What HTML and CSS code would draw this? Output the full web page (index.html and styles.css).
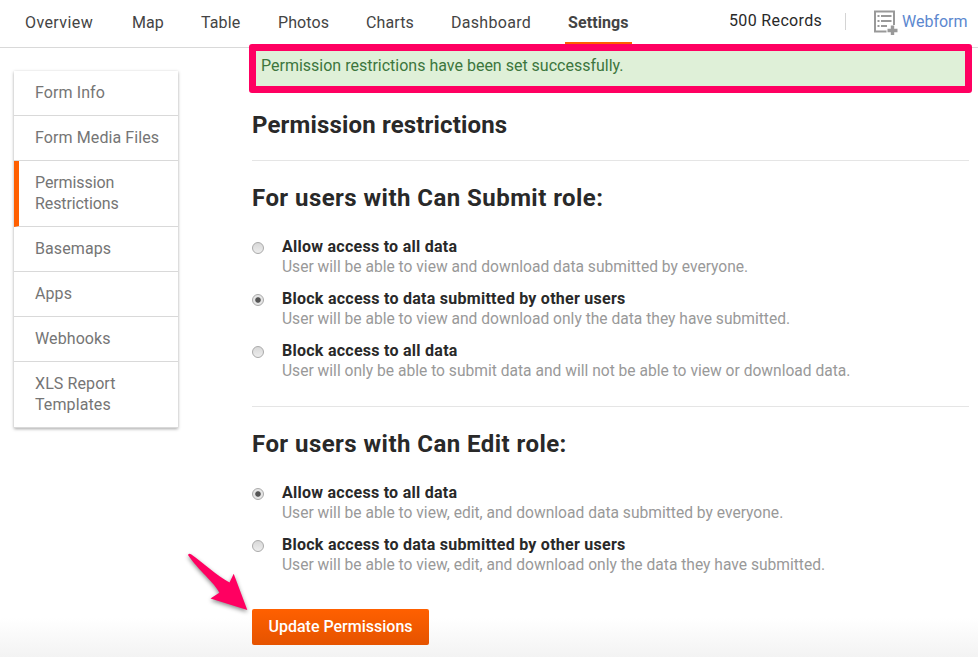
FILE: index.html
```html
<!DOCTYPE html>
<html lang="en">
<head>
<meta charset="utf-8">
<title>Permission restrictions</title>
<link rel="stylesheet" href="styles.css">
</head>
<body>
<header class="topbar">
  <nav class="tabs">
    <a class="tab wide">Overview</a>
    <a class="tab">Map</a>
    <a class="tab">Table</a>
    <a class="tab">Photos</a>
    <a class="tab">Charts</a>
    <a class="tab">Dashboard</a>
    <a class="tab active">Settings</a>
  </nav>
  <span class="records">500 Records</span>
  <a class="webform">
    <svg width="25" height="25" viewBox="0 0 25 25" fill="none" stroke="#999">
      <path stroke-width="2" d="M21 15V1.500H2V21.500H13.500"/>
      <path stroke-width="2" d="M4.500 6h2M8 6h10.500M4.500 11h2M8 11h10.500M4.500 16h2M8 16h6"/>
      <path stroke-width="3.400" d="M14.500 20.500h10M19.500 15.500v9.500"/>
    </svg>
    <span>Webform</span>
  </a>
</header>

<div class="page">
  <aside class="side">
    <a class="side-item">Form Info</a>
    <a class="side-item">Form Media Files</a>
    <a class="side-item current">Permission<br>Restrictions</a>
    <a class="side-item">Basemaps</a>
    <a class="side-item">Apps</a>
    <a class="side-item">Webhooks</a>
    <a class="side-item">XLS Report<br>Templates</a>
  </aside>

  <main class="main">
    <div class="alert">Permission restrictions have been set successfully.<span class="highlight"></span></div>
    <h1 class="title">Permission restrictions</h1>

    <section class="group">
      <h2 class="title role">For users with Can Submit role:</h2>
      <div class="option"><i class="radio"></i><div><div class="name">Allow access to all data</div><div class="desc">User will be able to view and download data submitted by everyone.</div></div></div>
      <div class="option"><i class="radio on"></i><div><div class="name">Block access to data submitted by other users</div><div class="desc">User will be able to view and download only the data they have submitted.</div></div></div>
      <div class="option"><i class="radio"></i><div><div class="name">Block access to all data</div><div class="desc">User will only be able to submit data and will not be able to view or download data.</div></div></div>
    </section>

    <section class="group">
      <h2 class="title role">For users with Can Edit role:</h2>
      <div class="option"><i class="radio on"></i><div><div class="name">Allow access to all data</div><div class="desc">User will be able to view, edit, and download data submitted by everyone.</div></div></div>
      <div class="option"><i class="radio"></i><div><div class="name">Block access to data submitted by other users</div><div class="desc">User will be able to view, edit, and download only the data they have submitted.</div></div></div>
    </section>

    <div class="actions">
      <button class="update">Update Permissions</button>
      <svg class="arrow" width="70" height="66" viewBox="184 550 70 66">
        <path fill="#ff0061" d="M188 555Q189 553 191 554.300C204 563.500 216 575 229.500 582.500L233.700 573.700L247.300 610L210.500 598.500L219.300 592.700C215 583 198 570 188 555Z"/>
      </svg>
    </div>
  </main>
</div>
</body>
</html>
```
FILE: styles.css
```css
* { box-sizing: border-box; }

body {
  margin: 0;
  height: 657px;
  overflow: hidden;
  font: 16px/21px Roboto, "Liberation Sans", sans-serif;
  color: #292929;
  background: linear-gradient(#fff 0, #fff 618px, #f3f3f3 657px);
}

.topbar {
  display: flex;
  height: 48px;
  padding-left: 25px;
  border-bottom: 1px solid #d9d9d9;
  background: #fff;
}

.tabs {
  display: grid;
  grid-template-columns: 107px 69px 77px 88px 85px 114px 67px;
  color: #444;
}

.tab { padding-top: 12px; letter-spacing: 0.1px; }
.tab.wide { letter-spacing: 0.4px; }
.tab:nth-child(6) { letter-spacing: 0.3px; }

.tab.active {
  height: 45px;
  padding-left: 3px;
  border-bottom: 3px solid #ff5f00;
  font-weight: 700;
  letter-spacing: 0.1px;
}

.records {
  width: 117px;
  height: 17px;
  margin: 13px 0 0 97px;
  border-right: 1px solid #d4d4d4;
  line-height: 16px;
  letter-spacing: 0.35px;
}

.webform {
  display: flex;
  gap: 4px;
  padding: 10px 0 0 27px;
  color: #5c88cf;
}

.webform span { margin-top: 1px; }

.page {
  display: flex;
  gap: 74px;
  padding-left: 14px;
}

.side {
  width: 164px;
  height: 357px;
  margin-top: 23px;
  background: #fff;
  box-shadow: 0 1px 3px rgba(0, 0, 0, 0.35);
  color: #757575;
}

.side-item {
  display: block;
  padding: 11px 0 12px 21px;
  border-bottom: 1px solid #d9d9d9;
  letter-spacing: 0.1px;
}

.side-item.current {
  padding-left: 16px;
  border-left: 5px solid #ff5f00;
  letter-spacing: -0.1px;
}

.main { width: 717px; }

.alert {
  position: relative;
  height: 41px;
  padding: 7px 9px;
  background: #dff0d8;
  color: #3c763d;
}

.highlight {
  position: absolute;
  inset: -4px -3px -4px;
  border: 7px solid #ff0061;
  border-radius: 3px;
}

.title {
  margin: 0;
  font-size: 24px;
  line-height: 30px;
  font-weight: 700;
  letter-spacing: 0.16px;
}

h1.title { padding: 21px 0 20px; }

.group { border-top: 1px solid #e5e5e5; height: 246px; padding-top: 22px; }
.group + .group { height: 203px; }
.role { margin-bottom: 24px; letter-spacing: 0.45px; }

.option {
  display: flex;
  gap: 18px;
  height: 52px;
}

.radio {
  width: 12px;
  height: 12px;
  margin-top: 5px;
  border: 1px solid #aaa;
  border-radius: 50%;
  background: linear-gradient(#d8d8d8, #ededed);
}

.radio.on { background: radial-gradient(circle, #555 0 2.3px, #e5e5e5 3.2px); }

.name {
  line-height: 20px;
  font-weight: 700;
  letter-spacing: 0.26px;
}

.desc {
  font-size: 15.6px;
  color: #999;
}

.actions { position: relative; }

.update {
  display: block;
  width: 177px;
  height: 36px;
  padding: 0;
  border: 0;
  border-radius: 2px;
  background: linear-gradient(#ff6000, #e55300);
  color: #fff;
  font: 500 16px/36px Roboto, "Liberation Sans", sans-serif;
}

.arrow {
  position: absolute;
  left: -68px;
  top: -59px;
  filter: drop-shadow(0 2px 2px rgba(0, 0, 0, 0.45));
}
```
